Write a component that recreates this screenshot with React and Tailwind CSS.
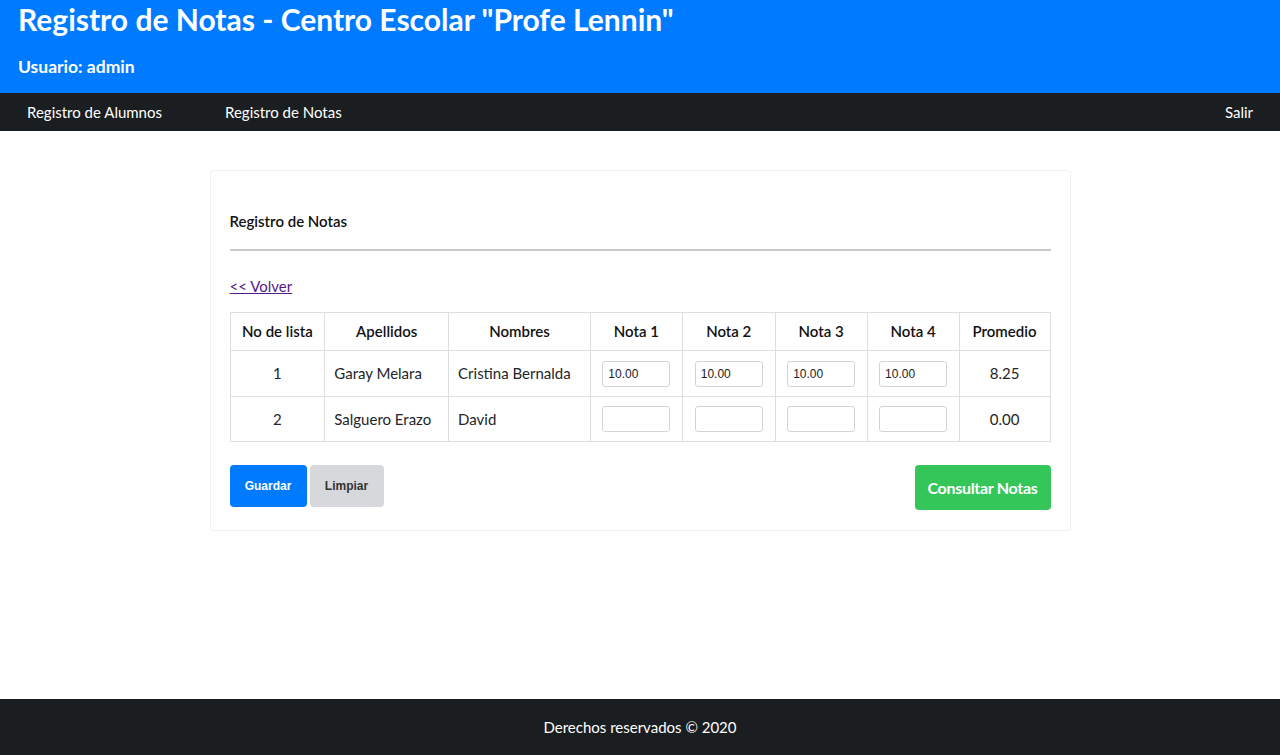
const rows = [
  { n: 1, ap: 'Garay Melara', nom: 'Cristina Bernalda', notas: ['10.00', '10.00', '10.00', '10.00'], prom: '8.25' },
  { n: 2, ap: 'Salguero Erazo', nom: 'David', notas: ['', '', '', ''], prom: '0.00' },
]

function NotaInput({ value }) {
  return (
    <input
      type="text"
      defaultValue={value}
      className="w-[68px] h-[26px] border border-[#d4d4d4] rounded-[3px] px-[5px] text-[12px] text-[#222] outline-none"
      style={{ fontFamily: '"Liberation Sans", Arial, sans-serif' }}
    />
  )
}

export default function App() {
  return (
    <div className="min-h-[755px] flex flex-col bg-white text-[#212529]" style={{ fontFamily: 'Lato, "Noto Sans", sans-serif' }}>
      <header className="bg-[#007bff] text-white h-[93px] px-[18px]">
        <h1 className="text-[30px] font-bold leading-[36px] pt-[1px]">Registro de Notas - Centro Escolar "Profe Lennin"</h1>
        <p className="text-[17.5px] font-bold mt-[20px] leading-[20px]">Usuario: admin</p>
      </header>
      <nav className="bg-[#1b1e21] h-[38px] flex items-center text-white text-[15px] px-[27px]">
        <a className="mr-[63px]">Registro de Alumnos</a>
        <a>Registro de Notas</a>
        <a className="ml-auto">Salir</a>
      </nav>

      <main className="flex-1 flex justify-center pt-[39px]">
        <div className="w-[861px] h-[361px] border border-[#f0f0f0] rounded-[4px] px-[19px] pt-[40px]">
          <h2 className="text-[15px] font-semibold leading-[20px] text-[#111]">Registro de Notas</h2>
          <hr className="mt-[18px] border-0 h-[2px] bg-[#c8c8c8]" />
          <a href="#" className="inline-block mt-[25px] text-[15px] leading-[20px] text-[#551a8b] underline">&lt;&lt; Volver</a>

          <table className="mt-[14px] w-full border-collapse text-[15px]">
            <thead>
              <tr className="h-[38px]">
                {['No de lista', 'Apellidos', 'Nombres', 'Nota 1', 'Nota 2', 'Nota 3', 'Nota 4', 'Promedio'].map((h, i) => (
                  <th
                    key={h}
                    className={`border border-[#dedede] font-semibold text-[#111] text-center ${['w-[95px]', 'w-[124px]', 'w-[142px]', 'w-[92px]', 'w-[93px]', 'w-[92px]', 'w-[92px]', 'w-[91px]'][i]}`}
                  >
                    {h}
                  </th>
                ))}
              </tr>
            </thead>
            <tbody>
              {rows.map((r, idx) => (
                <tr key={r.n} className={idx === 0 ? 'h-[46px]' : 'h-[45px]'}>
                  <td className="border border-[#dedede] text-center">{r.n}</td>
                  <td className="border border-[#dedede] px-[9px]">{r.ap}</td>
                  <td className="border border-[#dedede] px-[9px]">{r.nom}</td>
                  {r.notas.map((v, i) => (
                    <td key={i} className="border border-[#dedede] text-center">
                      <NotaInput value={v} />
                    </td>
                  ))}
                  <td className="border border-[#dedede] text-center">{r.prom}</td>
                </tr>
              ))}
            </tbody>
          </table>

          <div className="mt-[23px] flex items-start">
            <button
              className="w-[77px] h-[42px] bg-[#007bff] text-white rounded-[4px] text-[12px] font-bold"
              style={{ fontFamily: '"Liberation Sans", Arial, sans-serif' }}
            >
              Guardar
            </button>
            <button
              className="ml-[3px] w-[74px] h-[42px] bg-[#d6d8db] text-[#333] rounded-[4px] text-[12px] font-bold"
              style={{ fontFamily: '"Liberation Sans", Arial, sans-serif' }}
            >
              Limpiar
            </button>
            <button className="ml-auto w-[136px] h-[45px] bg-[#35c659] text-white rounded-[4px] text-[16px] font-bold tracking-[-0.3px]">
              Consultar Notas
            </button>
          </div>
        </div>
      </main>

      <footer className="bg-[#1b1e21] h-[56px] flex items-center justify-center text-white text-[15px]">
        Derechos reservados © 2020
      </footer>
    </div>
  )
}
